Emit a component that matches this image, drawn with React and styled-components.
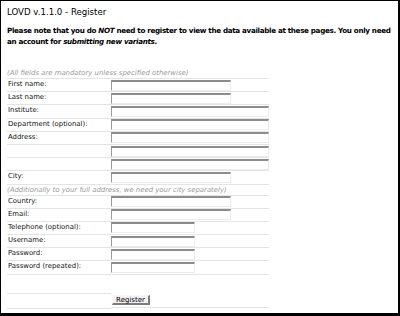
import React from "react";
import styled, { createGlobalStyle } from "styled-components";

const GlobalStyle = createGlobalStyle`
  html, body { margin: 0; padding: 0; background: #fff; }
  body { font-family: "DejaVu Sans", Verdana, sans-serif; }
`;

const Frame = styled.div`
  width: 400px;
  height: 316px;
  box-sizing: border-box;
  border: 1px solid #000;
  border-width: 1px 2px 3px 1px;
  padding: 6px 0 0 6px;
  overflow: hidden;
  color: #000;
`;

const Title = styled.h1`
  margin: 0 0 7px 0;
  font-size: 8.6px;
  font-weight: normal;
  line-height: 11px;
`;

const Intro = styled.p`
  margin: 0;
  font-size: 7.2px;
  font-weight: bold;
  line-height: 11px;
  letter-spacing: -0.33px;
  white-space: nowrap;
  em { font-style: italic; }
`;

const Form = styled.form`
  width: 262px;
  margin-top: 21px;
  display: grid;
  grid-template-columns: 104px 1fr;
  font-size: 6.9px;
  color: #111;
`;

const Note = styled.div`
  grid-column: 1 / -1;
  height: 10px;
  line-height: 10px;
  font-style: italic;
  color: #999;
  white-space: nowrap;
  border-top: ${(p) => (p.$line ? "1px solid #e4e4e4" : "none")};
`;

const Label = styled.div`
  height: 12.2px;
  line-height: 11.5px;
  border-top: 1px solid #e4e4e4;
  padding-left: 1px;
`;

const Cell = styled.div`
  height: 12.2px;
  border-top: 1px solid #e4e4e4;
  display: flex;
  align-items: center;
`;

const Input = styled.input`
  box-sizing: border-box;
  width: ${(p) => p.$w}px;
  height: 11px;
  margin: 0;
  padding: 0;
  background: #fff;
  border-style: solid;
  border-width: 2px 1px 1px 1px;
  border-color: #8c8c8c #ececec #ececec #9a9a9a;
`;

const Spacer = styled.div`
  grid-column: 1 / -1;
  height: 18px;
  border-top: 1px solid #e4e4e4;
`;

const ButtonRow = styled.div`
  grid-column: 2;
  height: 14px;
  display: flex;
  align-items: center;
  border-bottom: 1px solid #e4e4e4;
`;

const ButtonLine = styled.div`
  height: 14px;
  border-top: 1px solid #e4e4e4;
  border-bottom: 1px solid #e4e4e4;
`;

const Button = styled.button`
  margin-left: 1px;
  height: 10px;
  width: 38px;
  padding: 0;
  font-family: "DejaVu Sans", Verdana, sans-serif;
  font-size: 7px;
  line-height: 8px;
  color: #000;
  background: #f1f1f1;
  border-style: solid;
  border-width: 1px 2px 2px 1px;
  border-color: #f8f8f8 #7c7c7c #7c7c7c #f8f8f8;
`;

const fields = [
  { label: "First name:", w: 120 },
  { label: "Last name:", w: 120 },
  { label: "Institute:", w: 158 },
  { label: "Department (optional):", w: 158 },
  { label: "Address:", w: 158 },
  { label: "", w: 158 },
  { label: "", w: 158 },
  { label: "City:", w: 120 },
  { note: "(Additionally to your full address, we need your city separately)" },
  { label: "Country:", w: 120 },
  { label: "Email:", w: 120 },
  { label: "Telephone (optional):", w: 84 },
  { label: "Username:", w: 84 },
  { label: "Password:", w: 84, type: "password" },
  { label: "Password (repeated):", w: 84, type: "password" },
];

export default function App() {
  return (
    <Frame>
      <GlobalStyle />
      <Title>LOVD v.1.1.0 - Register</Title>
      <Intro>
        Please note that you do <em>NOT</em> need to register to view the data available at these pages. You only need
        <br />
        an account for <em>submitting new variants</em>.
      </Intro>
      <Form onSubmit={(e) => e.preventDefault()}>
        <Note>(All fields are mandatory unless specified otherwise)</Note>
        {fields.map((f, i) =>
          f.note ? (
            <Note key={i} $line>{f.note}</Note>
          ) : (
            <React.Fragment key={i}>
              <Label>{f.label}</Label>
              <Cell>
                <Input $w={f.w} type={f.type || "text"} />
              </Cell>
            </React.Fragment>
          )
        )}
        <Spacer />
        <ButtonLine />
        <ButtonRow>
          <Button type="submit">Register</Button>
        </ButtonRow>
      </Form>
    </Frame>
  );
}
